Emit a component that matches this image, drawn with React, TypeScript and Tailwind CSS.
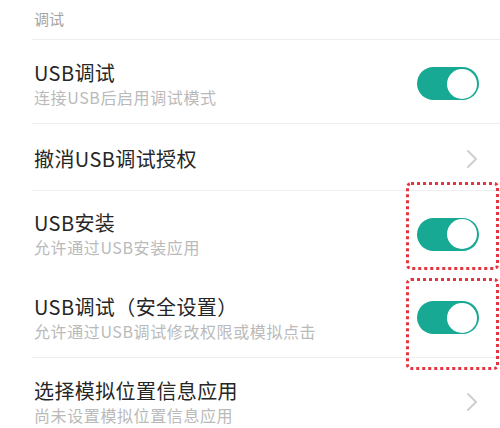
import React from "react";

type Row = {
  title: string;
  sub?: string;
  kind: "toggle" | "link";
  h: string;
  line: boolean;
};

const rows: Row[] = [
  { title: "USB调试", sub: "连接USB后启用调试模式", kind: "toggle", h: "h-[84px]", line: true },
  { title: "撤消USB调试授权", kind: "link", h: "h-[67px]", line: true },
  { title: "USB安装", sub: "允许通过USB安装应用", kind: "toggle", h: "h-[83px]", line: true },
  { title: "USB调试（安全设置）", sub: "允许通过USB调试修改权限或模拟点击", kind: "toggle", h: "h-[84px]", line: false },
  { title: "选择模拟位置信息应用", sub: "尚未设置模拟位置信息应用", kind: "link", h: "h-[84px]", line: true },
];

function Toggle() {
  return (
    <div className="flex h-[33px] w-[62px] items-center justify-end rounded-full bg-[#17a993] pr-[2px]">
      <div className="h-[30px] w-[30px] rounded-full bg-white" />
    </div>
  );
}

function Chevron() {
  return (
    <svg width="12" height="20" viewBox="0 0 12 20" className="mr-[1px]">
      <path d="M2 2 L10 10 L2 18" fill="none" stroke="#cfcfcf" strokeWidth="2" strokeLinecap="round" strokeLinejoin="round" />
    </svg>
  );
}

export default function App() {
  return (
    <div
      className="relative h-[428px] w-[500px] overflow-hidden bg-white"
      style={{ fontFamily: '"Noto Sans CJK SC", "Noto Sans", sans-serif' }}
    >
      {/* section header */}
      <div className="ml-[32px] flex h-[39px] items-center pl-[2px] text-[15px] text-[#a3a3a3]">调试</div>

      <div className="ml-[32px]">
        {rows.map((r) => (
          <div
            key={r.title}
            className={`flex ${r.h} items-center justify-between ${r.line ? "border-t border-[#eeeeee]" : "border-t border-transparent"} pt-[4px] pl-[2px] pr-[21px]`}
          >
            <div className="flex flex-col">
              <span className="text-[20px] leading-[24px] tracking-[0.4px] text-[#262626]">{r.title}</span>
              {r.sub && <span className="mt-[2px] text-[16px] leading-[20px] tracking-[0.6px] text-[#bababa]">{r.sub}</span>}
            </div>
            {r.kind === "toggle" ? <Toggle /> : <Chevron />}
          </div>
        ))}
      </div>

      {/* red highlight boxes */}
      <div className="absolute left-[406px] top-[182px] h-[88px] w-[93px] rounded-[5px] border-[3px] border-dotted border-[#e3343f]" />
      <div className="absolute left-[406px] top-[278px] h-[92px] w-[93px] rounded-[5px] border-[3px] border-dotted border-[#e3343f]" />
    </div>
  );
}
